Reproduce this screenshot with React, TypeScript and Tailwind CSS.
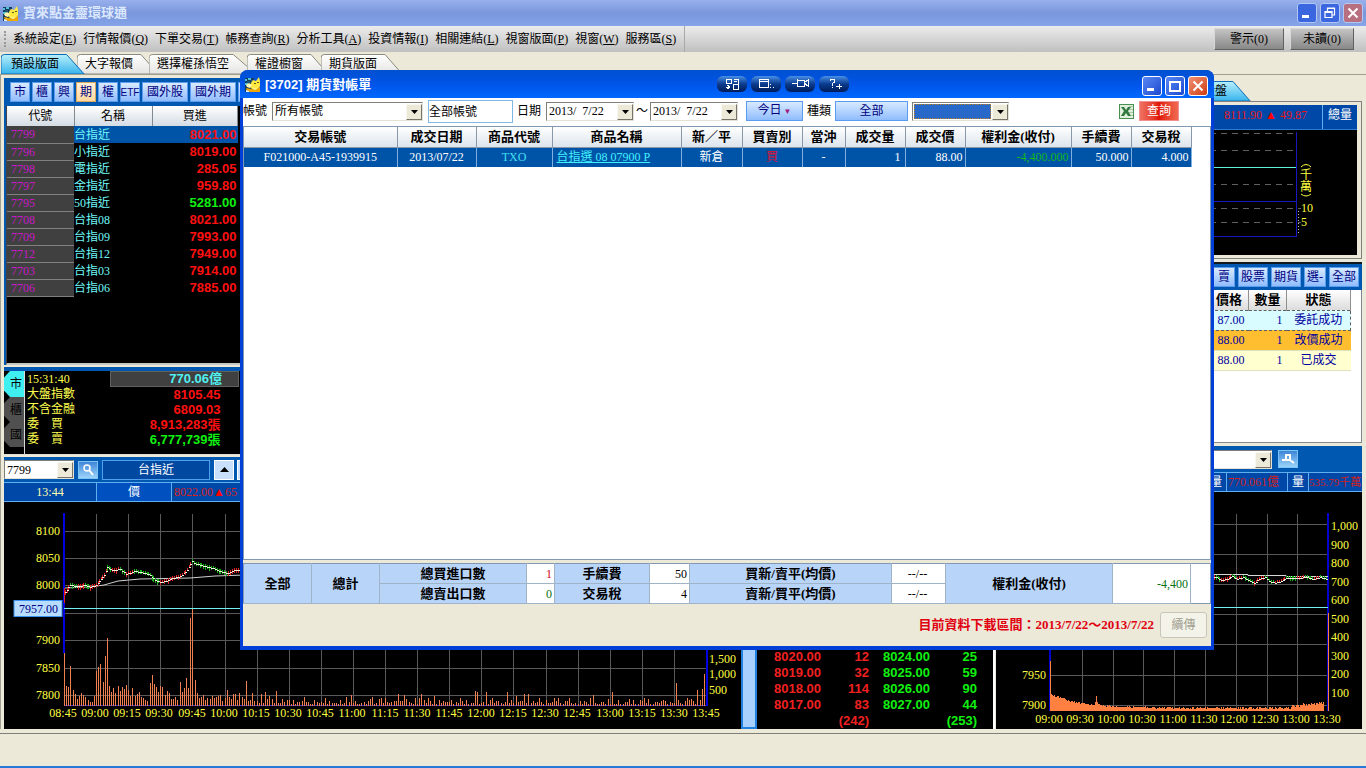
import { useState, type ReactNode } from 'react'
import clsx from 'clsx'

const SERIF = "font-['Liberation_Serif','Noto_Sans_CJK_TC',serif]"
const SANS = "font-['Liberation_Sans','Noto_Sans_CJK_TC',sans-serif]"

const MENUS: [string, string][] = [
  ['系統設定', 'E'],
  ['行情報價', 'Q'],
  ['下單交易', 'T'],
  ['帳務查詢', 'R'],
  ['分析工具', 'A'],
  ['投資情報', 'I'],
  ['相關連結', 'L'],
  ['視窗版面', 'P'],
  ['視窗', 'W'],
  ['服務區', 'S'],
]

const PAGE_TABS = [
  { label: '預設版面', className: 'z-10 w-[84px] pl-2.5' },
  { label: '大字報價', className: '-ml-2 w-[82px] pl-2' },
  { label: '選擇權孫悟空', className: '-ml-2.5 w-[108px] pl-2' },
  { label: '權證櫥窗', className: '-ml-2.5 w-[82px] pl-2' },
  { label: '期貨版面', className: '-ml-2 w-[82px] pl-2' },
]

const MARKETS = ['市', '櫃', '興', '期', '權', 'ETF', '國外股', '國外期']

const QUOTES = [
  { code: '7799', name: '台指近', bid: '8021.00', up: true },
  { code: '7796', name: '小指近', bid: '8019.00', up: true },
  { code: '7798', name: '電指近', bid: '285.05', up: true },
  { code: '7797', name: '金指近', bid: '959.80', up: true },
  { code: '7795', name: '50指近', bid: '5281.00', up: false },
  { code: '7708', name: '台指08', bid: '8021.00', up: true },
  { code: '7709', name: '台指09', bid: '7993.00', up: true },
  { code: '7712', name: '台指12', bid: '7949.00', up: true },
  { code: '7703', name: '台指03', bid: '7914.00', up: true },
  { code: '7706', name: '台指06', bid: '7885.00', up: true },
]

const INDEX_ROWS = [
  { label: '大盤指數', value: '8105.45', color: 'text-[#ff1010]' },
  { label: '不含金融', value: '6809.03', color: 'text-[#ff1010]' },
  { label: '委　買', value: '8,913,283張', color: 'text-[#ff1010]' },
  { label: '委　賣', value: '6,777,739張', color: 'text-[#10f010]' },
]

const DEPTH = [
  ['8020.00', '12', '8024.00', '25'],
  ['8019.00', '32', '8025.00', '59'],
  ['8018.00', '114', '8026.00', '90'],
  ['8017.00', '83', '8027.00', '44'],
  ['', '(242)', '', '(253)'],
]

const ORDERS = [
  { price: '87.00', qty: '1', status: '委託成功', bg: 'bg-[#d8fcff]' },
  { price: '88.00', qty: '1', status: '改價成功', bg: 'bg-[#ffbe30]' },
  { price: '88.00', qty: '1', status: '已成交', bg: 'bg-[#ffffd0]' },
]

/* ---------- small shared pieces ---------- */

function CatLogo() {
  return (
    <svg width="17" height="17" viewBox="0 0 17 17" className="shrink-0" aria-hidden="true">
      <path d="M1 2h9v14H1z" fill="#183c60" />
      <path d="M1 3h2v2H1zM4 2h3v2H4zM1 7h3v2H1z" fill="#50c0d8" />
      <path d="M3 5h3v2H3zM7 4h2v2H7z" fill="#205878" />
      <path d="M9 4l3 1 3-4 1 4v5l-2 3-5 1-3-3 1-4z" fill="#ffe840" />
      <path d="M2 9l3-2 3 2-2 3-3-1z" fill="#fff8b0" />
      <path d="M2 12l5 1 4 1 5-3v5H6l-3-1z" fill="#f0a800" />
      <path d="M8 11l4 1 2-1-2 3-3-1z" fill="#fff480" />
      <path d="M10 7h2v1h-2zM13 6h2v1h-2z" fill="#506020" />
      <path d="M2 14l3 1v1H2z" fill="#d8f0ff" />
    </svg>
  )
}

function CaptionButton({ kind, dim }: { kind: 'min' | 'max' | 'restore' | 'close'; dim?: boolean }) {
  const labels = { min: '最小化', max: '最大化', restore: '還原', close: '關閉' }
  return (
    <button
      type="button"
      aria-label={labels[kind]}
      className={clsx(
        'flex h-5 w-5 items-center justify-center rounded-[3px] border',
        dim ? 'border-[#b4c8f4]' : 'border-white',
        kind === 'close' && (dim ? 'bg-[#b87080]' : 'bg-linear-to-br from-[#f09070] to-[#d03808]'),
        kind !== 'close' && (dim ? 'bg-[#3a66e0]' : 'bg-linear-to-br from-[#5a88f4] to-[#1c48d0]'),
      )}
    >
      <svg width="18" height="18" viewBox="0 0 18 18" fill="none" stroke="#fff">
        {kind === 'min' && <path d="M4 12.5h7" strokeWidth="3" />}
        {kind === 'max' && <path d="M3.500 4.500h11M4 4v10h10V4" strokeWidth="2" shapeRendering="crispEdges" />}
        {kind === 'restore' && (
          <path d="M6.500 7V4h7v7h-3M6 4.500h8M4 7.500h7v6H4zM4 8.500h7" strokeWidth="1.2" />
        )}
        {kind === 'close' && <path d="M4.500 4.500l9 9M13.500 4.500l-9 9" strokeWidth="2" />}
      </svg>
    </button>
  )
}

function XpSelect({ label, options, className }: { label: string; options: string[]; className?: string }) {
  return (
    <span className={clsx('relative inline-flex h-[19px] shrink-0', className)}>
      <select
        aria-label={label}
        defaultValue={options[0]}
        className="h-full w-full appearance-none border border-[#7f7f78] border-r-[#e4e2d8] border-b-[#e4e2d8] bg-white pr-4 pl-0.5 text-xs leading-4 whitespace-pre text-black"
      >
        {options.map((o) => (
          <option key={o}>{o}</option>
        ))}
      </select>
      <span className="pointer-events-none absolute top-0.5 right-px bottom-px flex w-4 items-center justify-center border border-[#f8f7f0] border-r-[#77756a] border-b-[#77756a] bg-[#ece9d8]">
        <svg width="7" height="4" viewBox="0 0 7 4">
          <path d="M0 0h7L3.500 4z" fill="#000" />
        </svg>
      </span>
    </span>
  )
}

function SlantTab({ label, active, className }: { label: string; active?: boolean; className?: string }) {
  return (
    <button type="button" className={clsx('relative h-5 shrink-0 text-left text-xs leading-5 whitespace-nowrap text-black', className)}>
      <svg className="absolute inset-0 h-full w-full" viewBox="0 0 100 20" preserveAspectRatio="none" aria-hidden="true">
        <defs>
          <linearGradient id="tabOn" x1="0" y1="0" x2="0" y2="1">
            <stop offset="0" stopColor="#b8f0fc" />
            <stop offset="1" stopColor="#38b4ec" />
          </linearGradient>
          <linearGradient id="tabOff" x1="0" y1="0" x2="0" y2="1">
            <stop offset="0" stopColor="#ffffff" />
            <stop offset="1" stopColor="#e4e4e2" />
          </linearGradient>
        </defs>
        <path
          d="M0 20V4q0-3.500 4-3.500H78L99 20z"
          fill={active ? 'url(#tabOn)' : 'url(#tabOff)'}
          stroke={active ? '#0c6cb8' : '#8a8a80'}
          vectorEffect="non-scaling-stroke"
        />
      </svg>
      <span className="relative">{label}</span>
    </button>
  )
}

interface BlueButtonProps {
  children?: ReactNode
  on?: boolean
  label?: string
  className?: string
  onClick?: () => void
}

function BlueButton({ children, on, label, className, onClick }: BlueButtonProps) {
  return (
    <button
      type="button"
      aria-label={label}
      onClick={onClick}
      className={clsx(
        'h-5 shrink-0 border text-xs leading-4 whitespace-nowrap text-[#000080]',
        on
          ? 'border-[#d8a860] bg-linear-to-b from-[#fff0d8] to-[#ffd8a0]'
          : 'border-[#5a9cf0] bg-linear-to-b from-[#d8eaff] to-[#90bcfc]',
        className,
      )}
    >
      {children}
    </button>
  )
}

function SearchButton({ wrench }: { wrench?: boolean }) {
  return (
    <button
      type="button"
      aria-label={wrench ? '設定' : '搜尋'}
      className="flex h-[18px] w-5 items-center justify-center border border-[#7cc4f8] bg-linear-to-b from-[#3e86d8] to-[#9cd4fa]"
    >
      {wrench ? (
        <svg width="14" height="12" viewBox="0 0 14 12" fill="none" stroke="#fff" strokeWidth="2">
          <path d="M1 7h4V2h4v5H5M9 7l4 3" />
        </svg>
      ) : (
        <svg width="14" height="14" viewBox="0 0 14 14" fill="none" stroke="#fff" strokeWidth="1.500">
          <circle cx="6" cy="5" r="3" />
          <path d="M8 7l4 5" strokeWidth="2" />
        </svg>
      )}
    </button>
  )
}

/* ---------- charts ---------- */

// repeatable noise so that the bars stay the same between renders
const noise = (i: number) => {
  const v = Math.sin(i * 127.1 + 11.7) * 43758.5453
  return v - Math.floor(v)
}

const MORNING_VOLUME = [
  53, 20, 19, 40, 16, 12, 7, 10, 13, 11, 9, 6, 4, 4, 10, 35, 39, 42, 24, 50, 68, 20, 14, 18, 13, 20, 15, 19, 17, 21,
  16, 10, 18, 10, 12, 14, 9, 8, 6, 5, 23, 31, 22, 19, 14, 20, 19, 11, 15, 13, 7, 7, 9, 6, 24, 14, 18, 28, 18, 88, 97,
  26, 13, 8, 9, 11, 6, 8, 7, 10, 8, 9, 10, 11, 5, 8, 16, 9, 7, 12, 12, 6, 13, 9, 7, 25,
]

const VOLUME_PEAKS: Record<number, number> = {
  88: 13, 92: 12, 94: 14, 96: 10, 99: 15, 132: 9, 134: 11, 144: 9, 148: 8, 156: 12, 159: 11, 164: 8, 167: 12,
  170: 8, 192: 15, 193: 14, 197: 14, 202: 5, 207: 14, 211: 10, 215: 12, 217: 12, 247: 11, 256: 14, 286: 23,
  291: 8, 296: 16, 298: 17, 299: 32,
}

const volumeAt = (i: number) => MORNING_VOLUME[i] ?? VOLUME_PEAKS[i] ?? 2 + Math.round(noise(i) * noise(i + 7) * 9)

type Point = [number, number]

const FUTURES_PATH: Point[] = [
  [65, 592], [70, 585], [78, 586], [85, 585], [90, 587], [96, 585], [99, 581], [104, 575], [107, 567], [112, 570],
  [120, 569], [126, 574], [134, 571], [145, 573], [150, 575], [155, 580], [160, 582], [166, 581], [172, 578],
  [180, 576], [187, 570], [192, 561], [196, 564], [205, 566], [215, 569], [222, 572], [228, 573], [234, 570], [246, 569],
]

const INDEX_PATH: Point[] = [
  [1200, 578], [1216, 577], [1221, 580], [1227, 579], [1232, 576], [1237, 579], [1243, 577], [1248, 580], [1254, 583],
  [1259, 579], [1265, 577], [1269, 581], [1275, 583], [1281, 581], [1286, 578], [1297, 578], [1305, 577], [1314, 579],
  [1320, 577], [1328, 579],
]

function Candles({ path, wick }: { path: Point[]; wick: number }) {
  const ticks = path.slice(1).flatMap(([x2, y2], i) => {
    const [x1, y1] = path[i]
    const steps = Math.max(1, Math.round((x2 - x1) / 2))
    return Array.from({ length: steps }, (_, k) => ({
      x: Math.round(x1 + ((x2 - x1) * k) / steps),
      y: Math.round(y1 + ((y2 - y1) * k) / steps),
      up: y2 < y1,
      key: `${i}-${k}`,
    }))
  })
  return (
    <g shapeRendering="crispEdges">
      {ticks.map((t, i) => (
        <g key={t.key}>
          <rect x={t.x} y={t.y - 2} width="1" height={wick + Math.round(noise(i) * 3)} fill={t.up ? '#e02020' : '#18b018'} />
          <rect x={t.x} y={t.y} width="2" height="1" fill="#f0f0e0" />
        </g>
      ))}
    </g>
  )
}

const LEFT_TIMES = Array.from({ length: 21 }, (_, i) => {
  const m = 8 * 60 + 45 + i * 15
  return `${String(Math.floor(m / 60)).padStart(2, '0')}:${String(m % 60).padStart(2, '0')}`
})

function FuturesChart() {
  const prices: [string, number][] = [
    ['8100', 531], ['8050', 558], ['8000', 585], ['7900', 640], ['7850', 668], ['7800', 695],
  ]
  return (
    <svg width="737" height="227" viewBox="4 502 737 227" className={clsx('block shrink-0 text-xs', SERIF)} role="img" aria-label="台指近走勢圖">
      <g stroke="#585858" shapeRendering="crispEdges">
        {[531, 558, 585, 613, 640, 668, 695].map((y) => (
          <path key={y} d={`M64 ${y}.5H706`} />
        ))}
        {LEFT_TIMES.slice(1, -1).map((t, i) => (
          <path key={t} d={`M${Math.round(64 + (i + 1) * 32.1)}.5 514V706`} />
        ))}
      </g>
      <g shapeRendering="crispEdges">
        <path d="M64 705.5H708" stroke="#4030c0" />
        {Array.from({ length: 300 }, (_, i) => (
          <rect key={i} x={Math.round(64 + i * 2.14)} y={706 - volumeAt(i)} width="1" height={volumeAt(i)} fill="#f08050" />
        ))}
        <path d="M64 513V653M707 513V706" stroke="#0000e0" strokeWidth="2" />
        <path d="M64 608.5H706" stroke="#70f0f0" />
        <rect x="64" y="588" width="1" height="15" fill="#e02020" />
      </g>
      <path d="M65 588L90 587L104 585L118 581L140 579L190 578L215 576L245 575" fill="none" stroke="#d0d0d0" />
      <Candles path={FUTURES_PATH} wick={3} />
      <g fill="#ffff40">
        {prices.map(([p, y]) => (
          <text key={p} x="60" y={y + 4} textAnchor="end">{p}</text>
        ))}
        {LEFT_TIMES.map((t, i) => (
          <text key={t} x={Math.round(63 + i * 32.15)} y="717" textAnchor="middle">{t}</text>
        ))}
        <text x="709" y="663">1,500</text>
        <text x="709" y="678">1,000</text>
        <text x="709" y="694">500</text>
      </g>
      <rect x="14" y="600.5" width="48" height="16" fill="#b8dcff" stroke="#3890f0" />
      <text x="58" y="613" textAnchor="end" fill="#000080">7957.00</text>
    </svg>
  )
}

function IndexChart() {
  const volumes = ['1,000', '900', '800', '700', '600', '500', '400', '300', '200', '100']
  const times = ['09:00', '09:30', '10:00', '10:30', '11:00', '11:30', '12:00', '12:30', '13:00', '13:30']
  const height = (i: number) => {
    if (i === 0) return 50
    if (i > 44 && i < 48) return 9 + (i === 46 ? 6 : 0)
    if (i > 240) return 3 + Math.round((i - 240) / 8 + noise(i) * 3)
    return 2 + Math.round(14 * Math.exp(-i / 30) + noise(i) * 2)
  }
  return (
    <svg width="366" height="237" viewBox="996 492 366 237" className={clsx('block shrink-0 text-xs', SERIF)} role="img" aria-label="大盤走勢圖">
      <g stroke="#585858" shapeRendering="crispEdges">
        {[524, 554, 584, 614, 644, 675, 705].map((y) => (
          <path key={y} d={`M1050 ${y}.5H1328`} />
        ))}
        {times.slice(1, -1).map((t, i) => (
          <path key={t} d={`M${Math.round(1051 + (i + 1) * 30.8)}.5 514V711`} />
        ))}
      </g>
      <g shapeRendering="crispEdges">
        <path d="M1050 513V711M1328 513V711" stroke="#0000d0" strokeWidth="2" />
        {Array.from({ length: 274 }, (_, i) => (
          <rect key={i} x={1050 + i} y={711 - height(i)} width="1" height={height(i)} fill="#ff8040" />
        ))}
        <rect x="1328" y="613" width="1" height="98" fill="#ff8040" />
        <path d="M1050 607.5H1328" stroke="#70f0f0" />
      </g>
      <path d="M1200 574.500H1248V575.500H1286V576.500H1328" fill="none" stroke="#d8d8d8" />
      <Candles path={INDEX_PATH} wick={2} />
      <g fill="#ffff40">
        {volumes.map((v, i) => (
          <text key={v} x="1331" y={Math.round(530 + i * 18.5)}>{v}</text>
        ))}
        <text x="1046" y="679" textAnchor="end">7950</text>
        <text x="1046" y="709" textAnchor="end">7900</text>
        {times.map((t, i) => (
          <text key={t} x={Math.round(1049 + i * 30.9)} y="723" textAnchor="middle">{t}</text>
        ))}
      </g>
    </svg>
  )
}

function MarketChart() {
  return (
    <svg width="356" height="125" viewBox="1001 129 356 125" className={clsx('block bg-black text-xs', SERIF)} role="img" aria-label="盤勢量能圖">
      <g shapeRendering="crispEdges">
        <path d="M1001 132.5H1296M1001 149.5H1296M1001 183.5H1296M1001 207.5H1301M1001 221.5H1301" stroke="#606060" strokeDasharray="6 5" />
        <path d="M1001 166.5H1296" stroke="#60f0d8" />
        <path d="M1001 200.5H1296M1001 235.5H1296M1296.500 131V236" stroke="#1818c0" />
        <path d="M1298 210V234" stroke="#c0c0c0" strokeDasharray="1 2" />
      </g>
      <g fill="#ffff40">
        <path d="M1301 166q5-5 10 0M1301 193q5 4 10 0" fill="none" stroke="#ffff40" />
        <text x="1300" y="178">千</text>
        <text x="1300" y="190">萬</text>
        <text x="1301" y="211">10</text>
        <text x="1301" y="225">5</text>
      </g>
    </svg>
  )
}

/* ---------- panels ---------- */

function QuotePanel() {
  const [market, setMarket] = useState('期')
  return (
    <section className="flex flex-1 flex-col bg-[#0058b0]">
      <div className="flex h-7 items-center gap-0.5 pl-1.5">
        {MARKETS.map((m) => (
          <BlueButton key={m} on={m === market} onClick={() => setMarket(m)} className={m.startsWith('國外') ? 'w-[46px]' : 'w-5'}>
            <span className={m === 'ETF' ? clsx('-mx-1 text-[10px]', SANS) : ''}>{m}</span>
          </BlueButton>
        ))}
        <BlueButton label="更多" className="w-8" />
      </div>
      <div className="ml-0.5 flex-1 border border-t-0 border-b-2 border-[#404048] border-b-[#c8c8c8] bg-black">
        <table className="w-[231px] table-fixed border-collapse text-xs">
          <colgroup>
            <col className="w-[67px]" />
            <col className="w-[78px]" />
            <col />
          </colgroup>
          <thead>
            <tr className="h-5 bg-linear-to-b from-white to-[#d4dce4] leading-4">
              {['代號', '名稱', '買進'].map((h) => (
                <th key={h} className="border-r border-[#808890] p-0 font-normal text-black">{h}</th>
              ))}
            </tr>
          </thead>
          <tbody>
            {QUOTES.map((q, i) => (
              <tr key={q.code} className={clsx('h-[17px] leading-4', i === 0 && 'bg-[#0054a8]')}>
                <td className="border-b border-[#808080] bg-[#404040] p-0 pl-1 text-[#c818c8]">{q.code}</td>
                <td className="p-0 text-[#70f8f8]">{q.name}</td>
                <td className={clsx('p-0 pr-px text-right text-[13px] font-bold', SANS, q.up ? 'text-[#ff1010]' : 'text-[#10f010]')}>
                  {q.bid}
                </td>
              </tr>
            ))}
          </tbody>
        </table>
      </div>
    </section>
  )
}

function IndexPanel() {
  return (
    <section className="mt-0.5 flex h-[88px] border-t-4 border-b border-t-[#0058b0] border-b-[#e0e0d8] bg-black">
      <div className="flex w-[21px] flex-col border-r border-[#d8d8d8] text-xs">
        {['市', '櫃', '國'].map((t, i) => (
          <button
            key={t}
            type="button"
            className={clsx(
              'w-full pl-1 text-black [clip-path:polygon(30%_0,100%_0,100%_100%,30%_100%,0_75%,0_25%)]',
              i === 0 ? 'h-[26px] bg-[#40f0f0]' : 'h-[25px] bg-[#505050]',
            )}
          >
            {t}
          </button>
        ))}
      </div>
      <table className="ml-0.5 h-[75px] w-[212px] table-fixed text-xs leading-[15px]">
        <tbody>
          <tr>
            <td className="w-[83px] p-0 text-[#ffff50]">15:31:40</td>
            <td className={clsx('border border-[#606060] bg-[#404040] p-0 pr-4 text-right text-[13px] leading-3 font-bold text-[#50f0f0]', SANS)}>770.06億</td>
          </tr>
          {INDEX_ROWS.map((r) => (
            <tr key={r.label}>
              <td className="p-0 text-[#ffff50]">{r.label}</td>
              <td className={clsx('p-0 pr-[18px] text-right text-[13px] font-bold', SANS, r.color)}>{r.value}</td>
            </tr>
          ))}
        </tbody>
      </table>
    </section>
  )
}

function FuturesPanel() {
  return (
    <section className="mt-0.5 bg-[#0058b0]">
      <div className="flex h-[25px] items-center">
        <XpSelect label="商品代號" options={['7799']} className="w-[70px]" />
        <div className="ml-1"><SearchButton /></div>
        <div className="ml-1 h-5 w-[108px] border border-[#50a0f0] bg-[#0048a0] text-center text-xs leading-[18px] text-white">台指近</div>
        <button type="button" aria-label="上一檔" className="ml-1 flex h-5 w-5 items-center justify-center border border-white bg-[#c8e0fc]">
          <svg width="9" height="5" viewBox="0 0 9 5"><path d="M0 5h9L4.500 0z" /></svg>
        </button>
        <button type="button" aria-label="下一檔" className="ml-[3px] flex h-5 w-5 items-center justify-center border border-white bg-[#c8e0fc]">
          <svg width="9" height="5" viewBox="0 0 9 5"><path d="M0 0h9L4.500 5z" /></svg>
        </button>
      </div>
      <div className="flex h-5 border-y border-[#60b0f0] bg-[#0048a8] text-center text-xs leading-[18px]">
        <div className="w-[93px] border-r border-[#60b0f0] text-[#ffffb0]">13:44</div>
        <div className="w-[75px] border-r border-[#60b0f0] bg-[#0050c0] text-white">價</div>
        <div className="pl-0.5 text-[#d82020]">8022.00<span className="text-[#ff0000]">▲</span>65</div>
      </div>
    </section>
  )
}

function DepthPanel() {
  return (
    <section className="flex flex-1 flex-col justify-end bg-black pr-4 pl-0.5">
      <table className={clsx('w-[218px] table-fixed text-right text-[13px] leading-4 font-bold', SANS)}>
        <tbody>
          {DEPTH.map(([bid, bidQty, ask, askQty]) => (
            <tr key={bidQty} className="h-4">
              <td className="w-[62px] p-0 text-[#f02020]">{bid}</td>
              <td className="w-[48px] p-0 text-[#f02020]">{bidQty}</td>
              <td className="w-[61px] p-0 text-[#10f010]">{ask}</td>
              <td className="p-0 text-[#10f010]">{askQty}</td>
            </tr>
          ))}
        </tbody>
      </table>
    </section>
  )
}

function OrdersPanel() {
  return (
    <section className="flex flex-1 flex-col border-t-2 border-[#101820] bg-[#0058b0]">
      <div className="flex h-[26px] items-center justify-end gap-[3px] pr-[3px]">
        <BlueButton className="w-[22px]">賣</BlueButton>
        <BlueButton className="w-[30px]">股票</BlueButton>
        <BlueButton className="w-[30px]">期貨</BlueButton>
        <BlueButton className="w-[22px]">選-</BlueButton>
        <BlueButton className="w-[30px]">全部</BlueButton>
      </div>
      <div className="flex-1 border-r border-b border-[#808890] bg-white pr-2.5">
        <table className="w-full table-fixed border-collapse text-xs text-[#0000a0]">
          <colgroup>
            <col />
            <col className="w-[38px]" />
            <col className="w-16" />
          </colgroup>
          <thead>
            <tr className="h-5 bg-linear-to-b from-white to-[#dcdcdc] text-[13px] leading-4 text-black">
              <th className="border-r border-[#909090] p-0 pr-1.5 text-right">價格</th>
              <th className="border-r border-[#909090] p-0">數量</th>
              <th className="border-r border-[#909090] p-0">狀態</th>
            </tr>
          </thead>
          <tbody>
            {ORDERS.map((o, i) => (
              <tr key={o.status} className={clsx('h-5', o.bg, i === 0 ? 'border border-dashed border-[#606060]' : 'border-b border-[#e0e0c0]')}>
                <td className="p-0 pr-1 text-right">{o.price}</td>
                <td className="p-0 pr-1 text-right">{o.qty}</td>
                <td className="p-0 text-center">{o.status}</td>
              </tr>
            ))}
          </tbody>
        </table>
      </div>
    </section>
  )
}

function RightColumn() {
  return (
    <div className="flex w-[366px] shrink-0 flex-col">
      <div className="mt-1.5 flex h-5">
        <SlantTab label="大盤" active className="ml-[173px] w-[82px] pl-[34px]" />
      </div>
      <section className="mb-[3px] border-t border-r border-b border-[#808080] pt-[3px] pr-1 pb-[3px] pl-[5px]">
        <div className="flex h-[25px] justify-end border-b border-[#3078d0] bg-[#0048a8] text-xs leading-5 text-white">
          <div className="w-[99px] border-r border-[#60b0f0] whitespace-nowrap text-[#e81818]">
            8111.90 <span className="text-[#ff0000]">▲</span> 49.87
          </div>
          <div className="w-[34px] text-center">總量</div>
        </div>
        <MarketChart />
      </section>
      <OrdersPanel />
      <section className="mt-[3px] bg-[#0058b0]">
        <div className="flex h-[26px] items-center gap-1.5">
          <XpSelect label="大盤代號" options={['']} className="ml-24 w-[180px]" />
          <SearchButton wrench />
        </div>
        <div className="flex h-5 justify-end border-y border-[#60b0f0] bg-[#0048a8] text-xs leading-[18px] whitespace-nowrap text-white">
          <div className="w-4">量</div>
          <div className="w-[62px] border-x border-[#60b0f0] pl-px text-[#d02020]">770.061億</div>
          <div className="w-5 text-center">量</div>
          <div className="w-[54px] border-l border-[#60b0f0] text-[11px] text-[#d02020]">535.79千萬</div>
        </div>
      </section>
      <div className="bg-black"><IndexChart /></div>
    </div>
  )
}

/* ---------- statement window ---------- */

const TOOL_ICONS = [
  'M9 3h5v4H9zM17 3h4v9M10 9l3 2-3 2M13 11h-4M16 8h5v5h-5zM17 5h3',
  'M8 3h9v8H8zM8 5h9M19 11h1M22 11h1M19 8h1',
  'M7 7h5M12 3v8M12 4h7v6h-7M19 7l4-3v6z',
  'M11 5q0-2 2.500-2t2 2.500q0 1-2 2v2M13.500 11v1M17 10h6M20 8v5',
]

const COLUMNS = [
  { title: '交易帳號', width: 'w-[153px]', value: 'F021000-A45-1939915', cell: 'text-center text-white' },
  { title: '成交日期', width: 'w-[79px]', value: '2013/07/22', cell: 'text-center text-white' },
  { title: '商品代號', width: 'w-[76px]', value: 'TXO', cell: 'text-center text-[#40e0f0]' },
  { title: '商品名稱', width: 'w-[129px]', value: '台指選 08 07900 P', cell: 'pl-1 text-left text-[#40f0ff]', link: true },
  { title: '新／平', width: 'w-[61px]', value: '新倉', cell: 'text-center text-white' },
  { title: '買賣別', width: 'w-[60px]', value: '買', cell: 'text-center text-[#e01030]' },
  { title: '當沖', width: 'w-[43px]', value: '-', cell: 'text-center text-white' },
  { title: '成交量', width: 'w-[60px]', value: '1', cell: 'pr-1 text-right text-white' },
  { title: '成交價', width: 'w-[60px]', value: '88.00', cell: 'pr-0.5 text-right text-white' },
  { title: '權利金(收付)', width: 'w-[106px]', value: '-4,400.000', cell: 'pr-0.5 text-right text-[#10b818]' },
  { title: '手續費', width: 'w-[60px]', value: '50.000', cell: 'pr-0.5 text-right text-white' },
  { title: '交易稅', width: 'w-[60px]', value: '4.000', cell: 'pr-0.5 text-right text-white' },
]

function SummaryTable() {
  const head = 'border-r border-b border-[#a0b4c8] bg-[#b8d4f8] p-0 text-[13px] font-bold'
  const val = 'border-r border-b border-[#a0b4c8] bg-white p-0 pr-0.5'
  return (
    <table className="w-full table-fixed border-collapse border border-[#8098b0] bg-white text-xs leading-4">
      <colgroup>
        <col className="w-[68px]" />
        <col className="w-[68px]" />
        <col className="w-[147px]" />
        <col className="w-7" />
        <col className="w-[95px]" />
        <col className="w-10" />
        <col className="w-[202px]" />
        <col className="w-[54px]" />
        <col className="w-[167px]" />
        <col className="w-[78px]" />
        <col />
      </colgroup>
      <tbody>
        <tr className="h-5">
          <th rowSpan={2} className={head}>全部</th>
          <th rowSpan={2} className={head}>總計</th>
          <th className={head}>總買進口數</th>
          <td className={clsx(val, 'text-right text-[#d00020]')}>1</td>
          <th className={head}>手續費</th>
          <td className={clsx(val, 'text-right')}>50</td>
          <th className={head}>買新/賣平(均價)</th>
          <td className={clsx(val, 'text-center')}>--/--</td>
          <th rowSpan={2} className={head}>權利金(收付)</th>
          <td rowSpan={2} className={clsx(val, 'text-right text-[#087010]')}>-4,400</td>
          <td rowSpan={2} />
        </tr>
        <tr className="h-5">
          <th className={head}>總賣出口數</th>
          <td className={clsx(val, 'text-right text-[#087010]')}>0</td>
          <th className={head}>交易稅</th>
          <td className={clsx(val, 'text-right')}>4</td>
          <th className={head}>賣新/買平(均價)</th>
          <td className={clsx(val, 'text-center')}>--/--</td>
        </tr>
      </tbody>
    </table>
  )
}

function StatementWindow() {
  return (
    <div
      role="dialog"
      aria-label="期貨對帳單"
      className="absolute top-[70px] right-[152px] bottom-[118px] left-60 flex flex-col overflow-hidden rounded-t-lg bg-[#0040d8] px-[3px] pb-1"
    >
      <header className="-mx-[3px] flex h-7 shrink-0 items-center bg-linear-to-b from-[#0050d0] via-[#0054e8] to-[#0068ff] pr-1.5 pl-1">
        <CatLogo />
        <h1 className={clsx('mt-0.5 ml-1 text-[13px] font-bold text-white', SANS)}>[3702] 期貨對帳單</h1>
        <div className="ml-[72px] flex flex-1 justify-center gap-1">
          {TOOL_ICONS.map((d, i) => (
            <button key={d} type="button" aria-label={`視窗工具 ${i + 1}`} className="h-4 w-[30px] rounded-md bg-linear-to-b from-[#4890e8] via-[#0c3c90] to-[#001c58]">
              <svg width="30" height="16" viewBox="0 0 30 16" fill="none" stroke="#fff" shapeRendering="crispEdges"><path d={d} /></svg>
            </button>
          ))}
        </div>
        <div className="ml-5 flex gap-[3px] pt-1">
          <CaptionButton kind="min" />
          <CaptionButton kind="max" />
          <CaptionButton kind="close" />
        </div>
      </header>

      <form className="flex h-7 shrink-0 items-center overflow-hidden bg-white pb-0.5 text-xs whitespace-nowrap" onSubmit={(e) => e.preventDefault()}>
        <span className="w-[29px]">帳號</span>
        <XpSelect label="帳號" options={['所有帳號']} className="w-[151px]" />
        <input aria-label="帳號範圍" defaultValue="全部帳號" className="ml-[5px] h-[23px] w-[85px] border border-[#80b8e8]" />
        <span className="ml-1 w-[29px]">日期</span>
        <XpSelect label="開始日期" options={['2013/\u00a0 7/22']} className="w-[88px]" />
        <span className="w-4 text-center">～</span>
        <XpSelect label="結束日期" options={['2013/\u00a0 7/22']} className="w-[88px]" />
        <BlueButton className="ml-2 w-[57px]">今日<span className="text-[8px] text-[#a01880]"> ▼</span></BlueButton>
        <span className="mx-1">種類</span>
        <BlueButton className="w-[73px]">全部</BlueButton>
        <span className="relative ml-1 inline-flex">
          <XpSelect label="種類項目" options={['']} className="w-[97px]" />
          <span className="pointer-events-none absolute top-0.5 right-[18px] bottom-0.5 left-0.5 border border-dotted border-[#c08020] bg-[#2868c8]" />
        </span>
        <button type="button" aria-label="匯出 Excel" className="mr-1 ml-auto">
          <svg width="17" height="17" viewBox="0 0 17 17">
            <rect x="1.500" y="1.500" width="14" height="14" fill="#e0f0dc" stroke="#489050" />
            <path d="M11 3.500h4M11 6.500h4M11 9.500h4M11 12.500h4" stroke="#a8c8a8" />
            <path d="M3 4h3l2 3 2-3h3l-3 4 3 5h-3l-2-3-2 3H3l3-5z" fill="#307840" />
          </svg>
        </button>
        <button type="submit" className="mr-8 h-5 w-10 border border-[#f09090] bg-linear-to-r from-[#f07060] via-[#e01000] to-[#f06850] leading-4 text-white">查詢</button>
      </form>

      <div className="flex-1 border border-[#8098b0] bg-white">
        <table className="w-full table-fixed border-collapse text-xs leading-4">
          <colgroup>
            {COLUMNS.map((c) => (
              <col key={c.title} className={c.width} />
            ))}
            <col />
          </colgroup>
          <thead>
            <tr className="h-5 bg-linear-to-b from-white to-[#dce4ec] text-[13px]">
              {COLUMNS.map((c) => (
                <th key={c.title} className="border-r border-b border-[#8898a8] p-0 font-bold text-black">{c.title}</th>
              ))}
              <th className="bg-white p-0" />
            </tr>
          </thead>
          <tbody>
            <tr className="h-5">
              {COLUMNS.map((c) => (
                <td key={c.title} className={clsx('border-r border-[#80b0e0] bg-[#0054a8] p-0', c.cell)}>
                  {c.link ? <a href="#contract" className="underline">{c.value}</a> : c.value}
                </td>
              ))}
              <td />
            </tr>
          </tbody>
        </table>
      </div>

      <div className="shrink-0 bg-[#ece9d8] pt-[3px]">
        <SummaryTable />
      </div>

      <footer className="flex h-[42px] shrink-0 items-center justify-end bg-[#ece9d8] pr-1">
        <p className="text-[13px] font-bold text-[#e00010]">目前資料下載區間：2013/7/22～2013/7/22</p>
        <button type="button" disabled className="ml-1.5 h-[26px] w-[47px] rounded-[3px] border border-[#c8c6b8] bg-[#f4f3ea] text-xs text-[#a0a090]">續傳</button>
      </footer>
    </div>
  )
}

export default function App() {
  return (
    <div className={clsx('relative flex min-h-screen flex-col overflow-hidden bg-[#ece9d8] text-xs text-black', SERIF)}>
      <header className="flex h-[26px] items-center bg-linear-to-b from-[#98b0ec] via-[#7a96dc] to-[#84a4e8] pr-[3px] pl-0.5">
        <CatLogo />
        <span className="ml-1 text-[13px] font-bold text-[#dce8fc]">寶來點金靈環球通</span>
        <div className="ml-auto flex gap-[3px]">
          <CaptionButton kind="min" dim />
          <CaptionButton kind="restore" dim />
          <CaptionButton kind="close" dim />
        </div>
      </header>

      <nav className="flex h-[26px] items-center bg-linear-to-b from-[#ececec] to-[#c0c0c0] pr-3">
        <div className="flex h-full items-center gap-[7px] border-r border-[#a8a8a8] pr-2 pl-1">
          <span className="h-4 border-l-2 border-dotted border-[#989898]" />
          {MENUS.map(([label, key]) => (
            <button key={key} type="button" className="whitespace-nowrap">
              {label}(<u>{key}</u>)
            </button>
          ))}
        </div>
        <button type="button" className="ml-auto h-[22px] w-[70px] border border-[#d8d8d8] border-r-[#606060] border-b-[#606060] bg-linear-to-b from-[#c4c4c4] to-[#888888]">警示(0)</button>
        <button type="button" className="ml-1.5 h-[22px] w-16 border border-[#d8d8d8] border-r-[#606060] border-b-[#606060] bg-linear-to-b from-[#c4c4c4] to-[#888888]">未讀(0)</button>
      </nav>

      <div className="flex h-[22px] items-end pl-px">
        {PAGE_TABS.map((t, i) => (
          <SlantTab key={t.label} label={t.label} active={i === 0} className={t.className} />
        ))}
      </div>

      <main className="flex flex-1 border-t border-l border-[#a0a090] pr-1 pl-[3px]">
        <div className="flex min-w-0 flex-1 flex-col pt-[3px]">
          <QuotePanel />
          <IndexPanel />
          <FuturesPanel />
          <div className="flex h-[227px]">
            <div className="shrink-0 bg-black"><FuturesChart /></div>
            <div className="w-4 shrink-0 border-2 border-t-0 border-[#2080e0] bg-[#a8d0ff]" />
            <div className="w-[3px] bg-[#e8e8e0]" />
            <DepthPanel />
          </div>
        </div>
        <div className="mx-px w-0.5 bg-white" />
        <RightColumn />
      </main>

      <footer className="mt-1 h-[35px] border-t border-b-2 border-t-[#808078] border-b-[#2878d8] bg-[#ece9d8]" />

      <StatementWindow />
    </div>
  )
}
